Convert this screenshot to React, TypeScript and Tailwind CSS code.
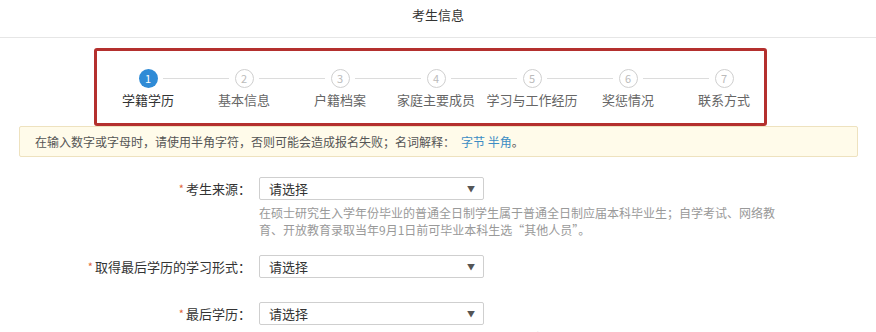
import React from "react";

const steps = ["学籍学历", "基本信息", "户籍档案", "家庭主要成员", "学习与工作经历", "奖惩情况", "联系方式"];

function Select() {
  return (
    <div className="w-[225px] h-[23px] border border-[#cfcfcf] rounded-[2px] flex items-center justify-between pl-[9px] pr-[8px] text-[13px] text-[#333] bg-white">
      <span>请选择</span>
      <span className="text-[8px] text-[#555]">▼</span>
    </div>
  );
}

function Row({ label, children, mt }: { label: string; children?: React.ReactNode; mt: string }) {
  return (
    <div className={`flex ${mt}`}>
      <div className="w-[251px] text-right text-[13px] leading-[23px] text-[#333] shrink-0">
        <span className="text-[#e0653a] text-[11px] mr-[2px] relative top-[-1px]">*</span>
        {label}：
      </div>
      <div className="ml-[8px]">
        <Select />
        {children}
      </div>
    </div>
  );
}

export default function App() {
  return (
    <div
      className="w-[876px] h-[332px] overflow-hidden bg-white"
      style={{ fontFamily: '"Noto Sans CJK SC", "Noto Sans", sans-serif' }}
    >
      <div className="h-[38px] border-b border-[#e6e6e6] flex justify-center pt-[6px] text-[13px] leading-[18px] text-[#333]">
        考生信息
      </div>
      <div className="mt-[10px] ml-[94px] w-[673px] h-[78px] border-[3px] border-[#b4302e] rounded-[3px] relative">
        <div className="absolute left-[3px] top-[18px] w-[672px] grid grid-cols-7">
          {steps.map((s, i) => (
            <div key={s} className="relative flex flex-col items-center">
              {i < steps.length - 1 && (
                <div className="absolute top-[9px] left-[calc(50%+15px)] w-[66px] h-px bg-[#dcdcdc]" />
              )}
              <div
                className={
                  i === 0
                    ? "w-[19px] h-[19px] rounded-full bg-[#2f8bd6] text-white text-[11px] leading-[19px] text-center"
                    : "w-[19px] h-[19px] rounded-full border border-[#cfcfcf] text-[#bbb] text-[11px] leading-[17px] text-center"
                }
              >
                {i + 1}
              </div>
              <div
                className={
                  i === 0
                    ? "mt-[4px] text-[13px] leading-[16px] text-[#333]"
                    : "mt-[4px] text-[13px] leading-[16px] text-[#666]"
                }
              >
                {s}
              </div>
            </div>
          ))}
        </div>
      </div>
      <div className="ml-[19px] w-[839px] h-[31px] bg-[#fffbea] border border-[#eee2bf] rounded-[2px] flex items-center pl-[15px] text-[12px] text-[#555]">
        在输入数字或字母时，请使用半角字符，否则可能会造成报名失败；名词解释：
        <span className="text-[#3c8dc4] ml-[6px]">字节 半角</span>。
      </div>
      <Row label="考生来源" mt="mt-[20px]">
        <div className="mt-[4px] text-[12px] leading-[17px] text-[#999] whitespace-nowrap">
          在硕士研究生入学年份毕业的普通全日制学生属于普通全日制应届本科毕业生；自学考试、网络教
          <br />
          育、开放教育录取当年9月1日前可毕业本科生选“其他人员”。
        </div>
      </Row>
      <Row label="取得最后学历的学习形式" mt="mt-[17px]" />
      <Row label="最后学历" mt="mt-[23px]">
        <div className="mt-[4px] text-[12px] leading-[17px] text-[#bbb] whitespace-nowrap">
          按照本人最后获得的学历证书填写，如有疑问请咨询报考点。
        </div>
      </Row>
    </div>
  );
}
